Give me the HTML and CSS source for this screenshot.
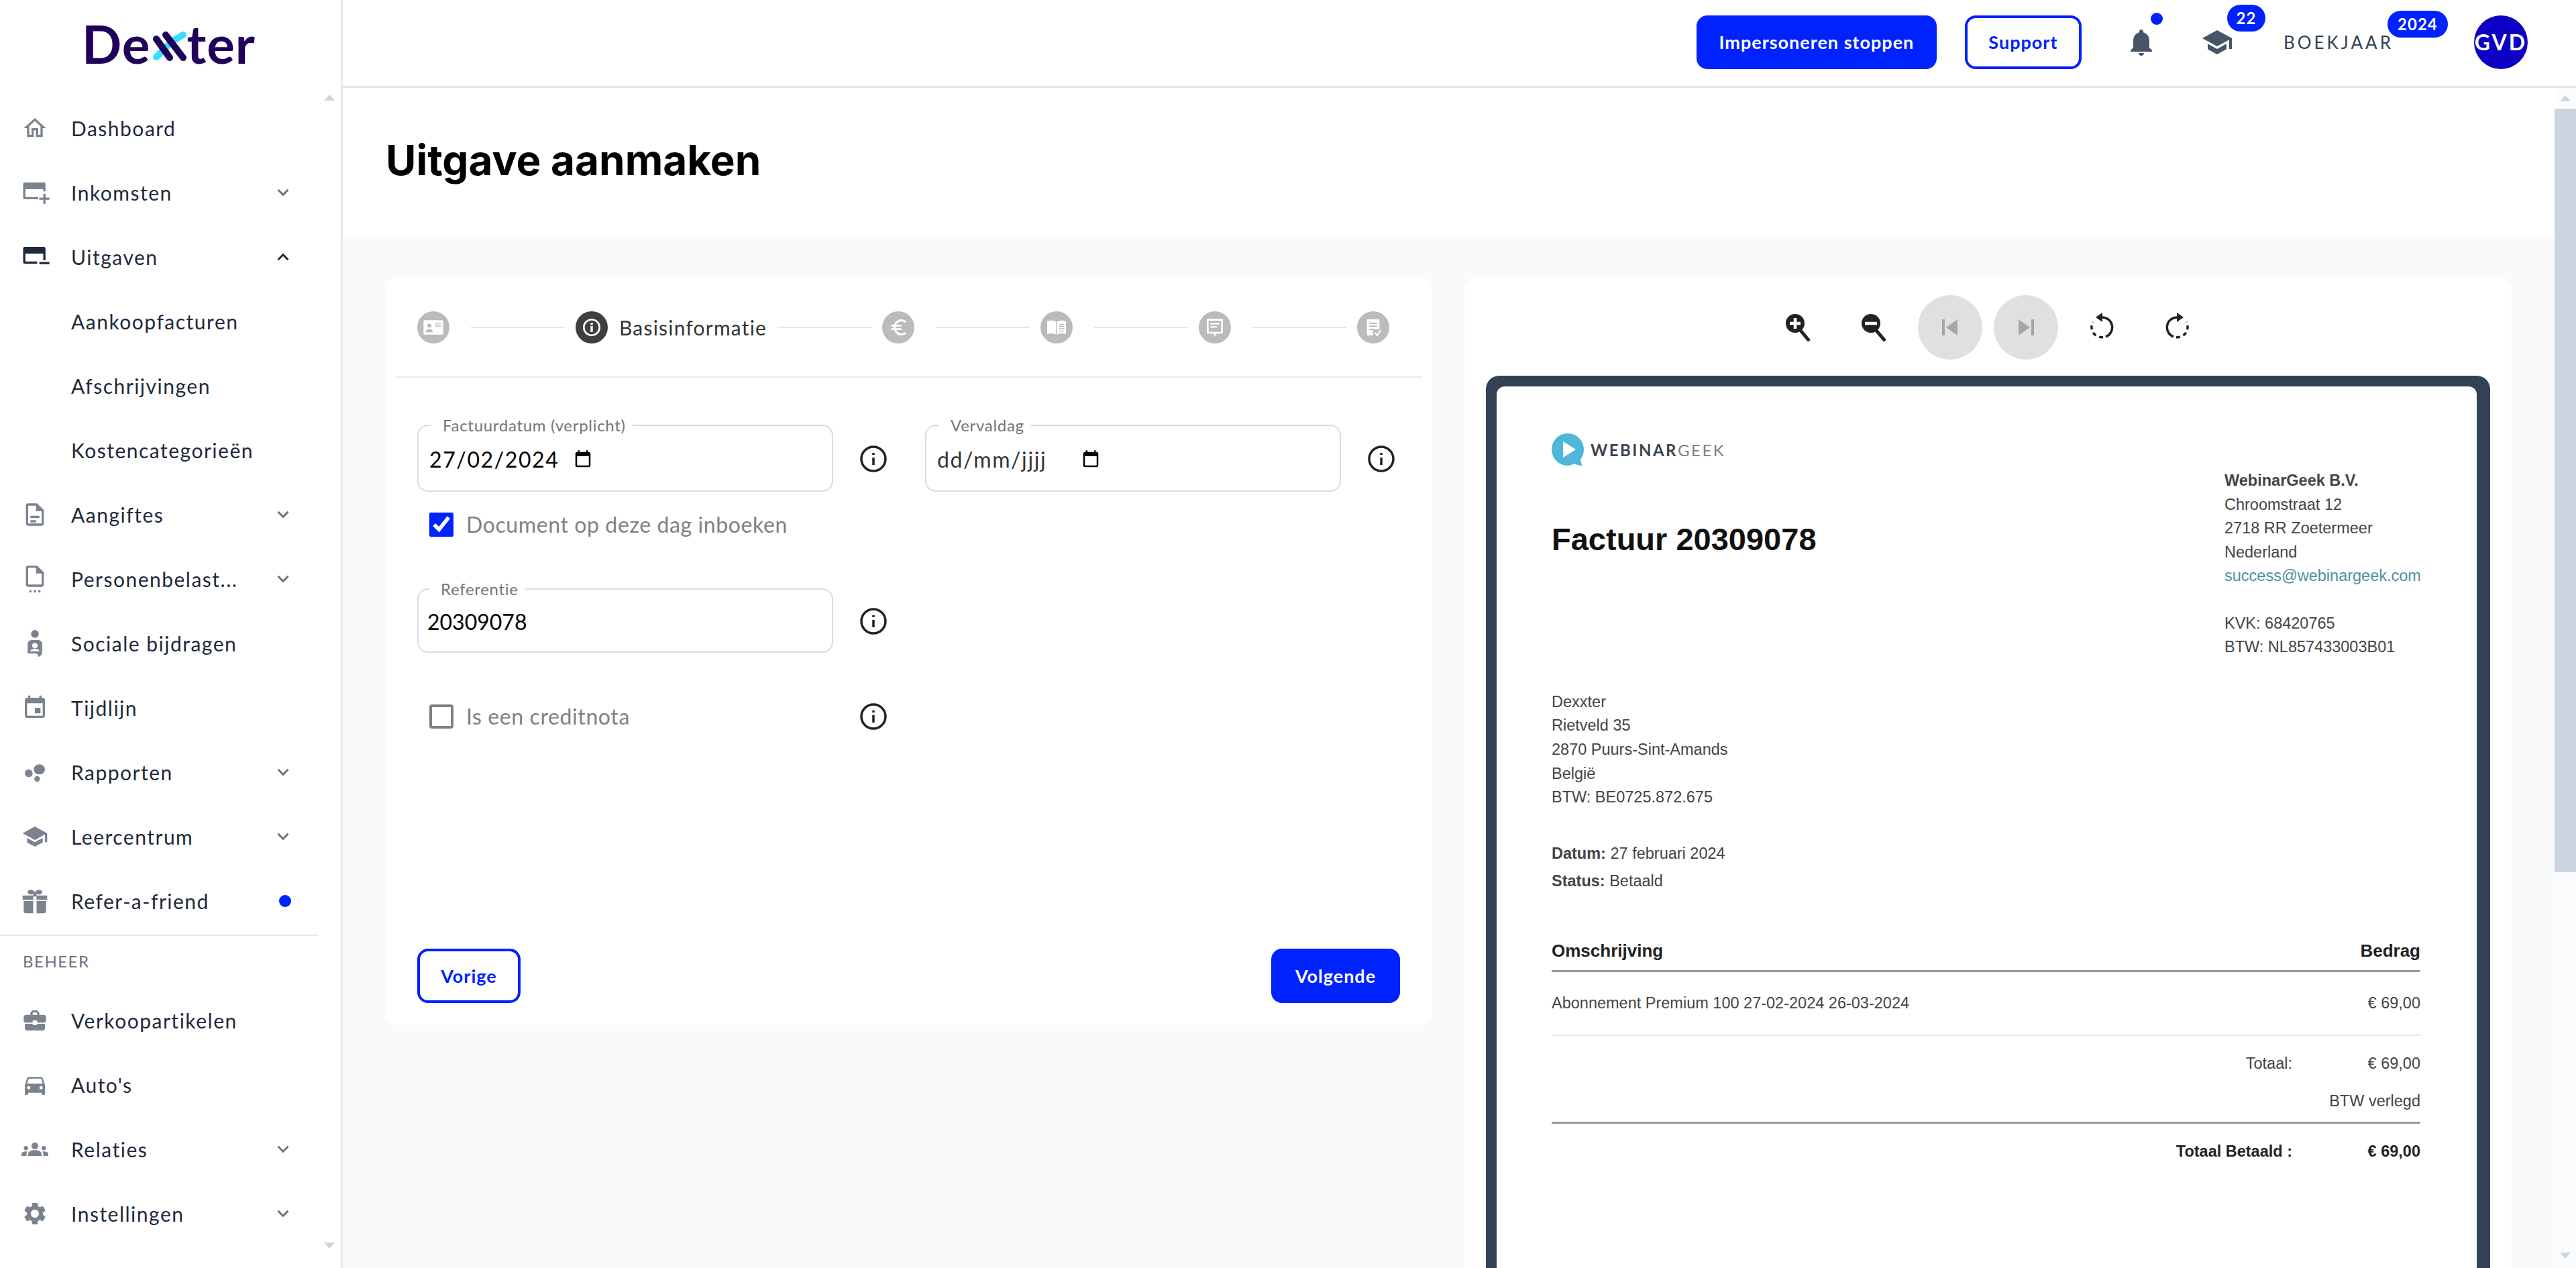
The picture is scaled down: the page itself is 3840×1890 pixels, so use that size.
FILE: index.html
```html
<!DOCTYPE html>
<html lang="nl">
<head>
    <meta charset="UTF-8">
    <title>Uitgave aanmaken</title>
    <link rel="stylesheet" href="styles.css">
</head>
<body>
    <aside class="sidebar">
        <div class="logo">
            <span>De</span>
            <svg class="logoX" viewBox="0 0 50 44" width="50" height="44">
                <path d="M5 38L22 21M31 13L45 5" stroke="#38dcff" stroke-width="10" stroke-linecap="round" fill="none"/>
                <path d="M5 11L25 39M19 5L45 39" stroke="#20005a" stroke-width="10" stroke-linecap="round" fill="none"/>
            </svg>
            <span>ter</span>
        </div>
        <nav class="nav">
            <a class="navRow">
                <svg class="navIcon" viewBox="0 0 24 24"><path d="M12 5.69l5 4.5V18h-2v-6H9v6H7v-7.81l5-4.5M12 3L2 12h3v8h6v-6h2v6h6v-8h3L12 3z"/></svg>
                Dashboard
            </a>
            <a class="navRow">
                <svg class="navIcon" viewBox="0 0 24 24"><path d="M3 3h17a1.500 1.500 0 0 1 1.500 1.500V11h-2V9H3.500v7H15v2H3a1.500 1.500 0 0 1-1.500-1.500v-12A1.500 1.500 0 0 1 3 3z"/><path d="M19.500 13h2v3.500H25v2h-3.500V22h-2v-3.500H16v-2h3.500z"/></svg>
                Inkomsten
                <svg class="chev" viewBox="0 0 24 24"><path d="M3 7l9 9 9-9" /></svg>
            </a>
            <a class="navRow active">
                <svg class="navIcon" viewBox="0 0 24 24"><path d="M3 3h17a1.500 1.500 0 0 1 1.500 1.500V15h-2V9H3.500v7H14v2H3a1.500 1.500 0 0 1-1.500-1.500v-12A1.500 1.500 0 0 1 3 3z"/><path d="M16 16.500h9v2h-9z"/></svg>
                Uitgaven
                <svg class="chev" viewBox="0 0 24 24"><path d="M3 17l9-9 9 9" /></svg>
            </a>
            <a class="navRow sub">Aankoopfacturen</a>
            <a class="navRow sub">Afschrijvingen</a>
            <a class="navRow sub">Kostencategorieën</a>
            <a class="navRow">
                <svg class="navIcon" viewBox="0 0 24 24"><path d="M14 2H6a2 2 0 0 0-2 2v16a2 2 0 0 0 2 2h12a2 2 0 0 0 2-2V8zm4 18H6V4h7v5h5zM8 13h8v2H8zm0 4h5v2H8z"/></svg>
                Aangiftes
                <svg class="chev" viewBox="0 0 24 24"><path d="M3 7l9 9 9-9" /></svg>
            </a>
            <a class="navRow">
                <svg class="navIcon" viewBox="0 0 24 24"><path d="M14 0H6a2 2 0 0 0-2 2v15a2 2 0 0 0 2 2h12a2 2 0 0 0 2-2V6zm4 17H6V2h7v5h5zM7 22h2v2H7zm4 0h2v2h-2zm4 0h2v2h-2z"/></svg>
                Personenbelast...
                <svg class="chev" viewBox="0 0 24 24"><path d="M3 7l9 9 9-9" /></svg>
            </a>
            <a class="navRow">
                <svg class="navIcon" viewBox="0 0 24 24"><circle cx="12" cy="3.500" r="3.500"/><path d="M9 9h6a3.500 3.500 0 0 1 3.500 3.500V20a4 4 0 0 1-4 4c1-1 .5-3-2.500-3H5.500v-8.500A3.500 3.500 0 0 1 9 9zm3 2.500a2.500 2.500 0 0 0 0 5 2.500 2.500 0 0 0 0-5zM8 19h8c0-1.500-2-2-4-2s-4 .5-4 2z"/></svg>
                Sociale bijdragen
            </a>
            <a class="navRow">
                <svg class="navIcon" viewBox="0 0 24 24"><path d="M17 12h-5v5h5v-5zM16 1v2H8V1H6v2H5c-1.110 0-1.990.9-1.990 2L3 19c0 1.100.89 2 2 2h14c1.100 0 2-.9 2-2V5c0-1.100-.9-2-2-2h-1V1h-2zm3 18H5V8h14v11z"/></svg>
                Tijdlijn
            </a>
            <a class="navRow">
                <svg class="navIcon" viewBox="0 0 24 24"><circle cx="6.500" cy="13" r="3.500"/><ellipse cx="16" cy="9.500" rx="5" ry="4.500"/><circle cx="14" cy="18" r="2.500"/></svg>
                Rapporten
                <svg class="chev" viewBox="0 0 24 24"><path d="M3 7l9 9 9-9" /></svg>
            </a>
            <a class="navRow">
                <svg class="navIcon" viewBox="0 0 24 24"><path d="M5 13.180v4L12 21l7-3.820v-4L12 17l-7-3.820zM12 3L1 9l11 6 9-4.910V17h2V9L12 3z"/></svg>
                Leercentrum
                <svg class="chev" viewBox="0 0 24 24"><path d="M3 7l9 9 9-9" /></svg>
            </a>
            <a class="navRow">
                <svg class="navIcon" viewBox="0 0 24 24"><path d="M1 7h9.500V5.500C9 6.500 5.500 6.500 5.500 4c0-2.500 4.500-3 6.500 0 2-3 6.500-2.500 6.500 0 0 2.500-3.500 2.500-5 1.500V7H23v4H13.500v-3h-3v3H1zm1 5h8.500v11H4a2 2 0 0 1-2-2zm11.500 0H22v9a2 2 0 0 1-2 2h-6.500z"/></svg>
                Refer-a-friend
                <span class="navDot"></span>
            </a>
        </nav>
        <hr class="navRule">
        <div class="navHead">BEHEER</div>
        <nav class="nav">
            <a class="navRow">
                <svg class="navIcon" viewBox="0 0 24 24"><path d="M10 16v-1H3.010L3 19c0 1.110.89 2 2 2h14c1.110 0 2-.89 2-2v-4h-7v1h-4zm10-9h-4.010V5l-2-2h-4l-2 2v2H4c-1.100 0-2 .9-2 2v3c0 1.110.89 2 2 2h6v-2h4v2h6c1.100 0 2-.9 2-2V9c0-1.100-.9-2-2-2zm-6 0h-4V5h4v2z"/></svg>
                Verkoopartikelen
            </a>
            <a class="navRow">
                <svg class="navIcon" viewBox="0 0 24 24"><path d="M18.920 6.010C18.720 5.420 18.160 5 17.500 5h-11c-.66 0-1.210.42-1.420 1.010L3 12v8c0 .55.45 1 1 1h1c.55 0 1-.45 1-1v-1h12v1c0 .55.45 1 1 1h1c.55 0 1-.45 1-1v-8l-2.080-5.990zM6.500 16c-.83 0-1.500-.67-1.500-1.500S5.670 13 6.500 13s1.500.67 1.500 1.500S7.330 16 6.500 16zm11 0c-.83 0-1.500-.67-1.500-1.500s.67-1.500 1.500-1.500 1.500.67 1.500 1.500-.67 1.500-1.500 1.500zM5 11l1.500-4.500h11L19 11H5z"/></svg>
                Auto's
            </a>
            <a class="navRow">
                <svg class="navIcon" viewBox="0 0 24 24"><path d="M12 12.750c1.630 0 3.070.39 4.240.9 1.080.48 1.760 1.560 1.760 2.730V18H6v-1.610c0-1.180.68-2.260 1.760-2.730 1.170-.52 2.610-.91 4.240-.91zM4 13c1.100 0 2-.9 2-2s-.9-2-2-2-2 .9-2 2 .9 2 2 2zm1.130 1.100c-.37-.06-.74-.1-1.130-.1-.99 0-1.930.21-2.780.58C.48 14.900 0 15.620 0 16.430V18h4.500v-1.610c0-.83.23-1.610.63-2.290zM20 13c1.100 0 2-.9 2-2s-.9-2-2-2-2 .9-2 2 .9 2 2 2zm4 3.430c0-.81-.48-1.530-1.220-1.850-.85-.37-1.790-.58-2.780-.58-.39 0-.76.04-1.130.1.4.68.63 1.460.63 2.290V18H24v-1.570zM12 6c1.660 0 3 1.340 3 3s-1.340 3-3 3-3-1.340-3-3 1.340-3 3-3z"/></svg>
                Relaties
                <svg class="chev" viewBox="0 0 24 24"><path d="M3 7l9 9 9-9" /></svg>
            </a>
            <a class="navRow">
                <svg class="navIcon" viewBox="0 0 24 24"><path d="M19.140 12.940c.04-.3.06-.61.06-.94 0-.32-.02-.64-.07-.94l2.030-1.580c.18-.14.23-.41.12-.61l-1.920-3.320c-.12-.22-.37-.29-.59-.22l-2.390.96c-.5-.38-1.030-.7-1.620-.94l-.36-2.540c-.04-.24-.24-.41-.48-.41h-3.840c-.24 0-.43.17-.47.41l-.36 2.540c-.59.24-1.130.57-1.620.94l-2.390-.96c-.22-.08-.47 0-.59.22L2.740 8.870c-.12.21-.08.47.12.61l2.030 1.580c-.05.3-.09.63-.09.94s.02.64.07.94l-2.030 1.580c-.18.14-.23.41-.12.61l1.920 3.320c.12.22.37.29.59.22l2.390-.96c.5.38 1.030.7 1.620.94l.36 2.540c.05.24.24.41.48.41h3.840c.24 0 .44-.17.47-.41l.36-2.540c.59-.24 1.130-.56 1.620-.94l2.390.96c.22.08.47 0 .59-.22l1.920-3.320c.12-.22.07-.47-.12-.61l-2.010-1.580zM12 15.600c-1.980 0-3.600-1.620-3.600-3.600s1.620-3.600 3.600-3.600 3.600 1.620 3.600 3.600-1.620 3.600-3.600 3.600z"/></svg>
                Instellingen
                <svg class="chev" viewBox="0 0 24 24"><path d="M3 7l9 9 9-9" /></svg>
            </a>
        </nav>
        <span class="sideArrow up"></span>
        <span class="sideArrow down"></span>
    </aside>

    <div class="main">
        <header class="topbar">
            <button class="btn primary">Impersoneren stoppen</button>
            <button class="btn outline">Support</button>
            <div class="topIcon bell">
                <svg viewBox="0 0 24 24" width="48" height="48"><path d="M12 22c1.100 0 2-.9 2-2h-4c0 1.100.89 2 2 2zm6-6v-5c0-3.070-1.640-5.640-4.500-6.320V4c0-.83-.67-1.500-1.500-1.500s-1.500.67-1.500 1.500v.68C7.630 5.360 6 7.920 6 11v5l-2 2v1h16v-1l-2-2z"/></svg>
                <span class="bellDot"></span>
            </div>
            <div class="topIcon cap">
                <svg viewBox="0 0 24 24" width="48" height="48"><path d="M5 13.180v4L12 21l7-3.820v-4L12 17l-7-3.820zM12 3L1 9l11 6 9-4.910V17h2V9L12 3z"/></svg>
                <span class="badge capBadge">22</span>
            </div>
            <div class="year">
                BOEKJAAR
                <span class="badge yearBadge">2024</span>
            </div>
            <div class="avatar">GVD</div>
        </header>

        <div class="pageWrap">
            <div class="page">
                <div class="titleBand"><h1>Uitgave aanmaken</h1></div>
                <div class="columns">
                    <section class="card formCard">
                        <div class="steps">
                            <span class="stepDot">
                                <svg viewBox="0 0 24 24"><rect x="1" y="4" width="22" height="16" rx="1" fill="#fff"/><circle cx="7.500" cy="10" r="2.200" fill="#bbb"/><path d="M3.500 17.500c0-2.500 1.500-3.500 4-3.500s4 1 4 3.500zM14 7.500h6.500v1H14zm0 2.500h6.500v1H14z" fill="#bbb"/></svg>
                            </span>
                            <span class="stepLine firstLine"></span>
                            <span class="stepDot current">
                                <svg viewBox="0 0 24 24"><circle cx="12" cy="12" r="8.800" fill="none" stroke="#fff" stroke-width="2"/><path d="M10.700 10.500h2.600V17h-2.600zM10.700 6.800h2.600v2.400h-2.600z" fill="#fff"/></svg>
                            </span>
                            <span class="stepLabel">Basisinformatie</span>
                            <span class="stepLine"></span>
                            <span class="stepDot">
                                <svg viewBox="0 0 24 24"><path d="M15.500 18.500A6.500 6.500 0 0 1 9.700 15H15.500v-2H9.060a6 6 0 0 1 0-2h6.440V9H9.700a6.500 6.500 0 0 1 5.800-3.500c1.600 0 3.100.6 4.200 1.500L21 5.200A8.900 8.900 0 0 0 15.500 3 9 9 0 0 0 7.300 9H4v2h2.600a9 9 0 0 0 0 2H4v2h3.300a9 9 0 0 0 8.200 6c2.100 0 4-.8 5.500-2l-1.300-1.800c-1.100.9-2.600 1.300-4.200 1.300z" fill="#fff"/></svg>
                            </span>
                            <span class="stepLine"></span>
                            <span class="stepDot">
                                <svg viewBox="0 0 24 24"><path d="M1.500 5c3.500-1 7-1 10 .5V20c-3-1.500-6.500-1.500-10-.5zm11 .5c3-1.500 6.500-1.500 10-.5v14.500c-3.500-1-7-1-10 .5z" fill="#fff"/><path d="M14.500 8h6v1h-6zm0 2.500h6v1h-6zm0 2.500h6v1h-6zm0 2.500h6v1h-6z" fill="#bbb"/></svg>
                            </span>
                            <span class="stepLine"></span>
                            <span class="stepDot">
                                <svg viewBox="0 0 24 24"><path d="M4 2.500h16a1 1 0 0 1 1 1V18a1 1 0 0 1-1 1h-6l-2.500 3.500-.5-3.500H4a1 1 0 0 1-1-1V3.500a1 1 0 0 1 1-1z" fill="#fff"/><path d="M5 4.500h14V17H5z" fill="#bbb"/><path d="M7 7h10v1.800H7zm0 3.500h7v1.800H7z" fill="#fff"/></svg>
                            </span>
                            <span class="stepLine"></span>
                            <span class="stepDot">
                                <svg viewBox="0 0 24 24"><path d="M6 3h12a1 1 0 0 1 1 1v16a1 1 0 0 1-1 1H6a1 1 0 0 1-1-1V4a1 1 0 0 1 1-1z" fill="#fff"/><path d="M7.500 6.500h9V8h-9zm0 3.500h9v1.500h-9zm0 3.500h5V15h-5zM12 14h9v9h-9z" fill="#bbb"/><path d="M14 18l2.500 3 4-6" stroke="#fff" stroke-width="1.500" fill="none"/></svg>
                            </span>
                        </div>
                        <div class="form">
                            <div class="formRow">
                                <div class="fieldWrap">
                                    <fieldset class="field dateField">
                                        <legend>Factuurdatum (verplicht)</legend>
                                        <input class="fieldInput dateInput" value="27/02/2024">
                                        <svg class="calIcon" viewBox="0 0 24 24"><path d="M19 3h-1V1h-2v2H8V1H6v2H5a2 2 0 0 0-2 2v14a2 2 0 0 0 2 2h14a2 2 0 0 0 2-2V5a2 2 0 0 0-2-2zm0 16H5V8h14z"/></svg>
                                    </fieldset>
                                    <svg class="info" viewBox="0 0 40 40"><circle cx="20" cy="20" r="18"/><path d="M20 18v11M20 11v3"/></svg>
                                </div>
                                <div class="fieldWrap">
                                    <fieldset class="field dateField">
                                        <legend>Vervaldag</legend>
                                        <input class="fieldInput dateInput placeholderDate" value="dd/mm/jjjj">
                                        <svg class="calIcon" viewBox="0 0 24 24"><path d="M19 3h-1V1h-2v2H8V1H6v2H5a2 2 0 0 0-2 2v14a2 2 0 0 0 2 2h14a2 2 0 0 0 2-2V5a2 2 0 0 0-2-2zm0 16H5V8h14z"/></svg>
                                    </fieldset>
                                    <svg class="info" viewBox="0 0 40 40"><circle cx="20" cy="20" r="18"/><path d="M20 18v11M20 11v3"/></svg>
                                </div>
                            </div>
                            <label class="check bookCheck">
                                <input type="checkbox" checked>
                                Document op deze dag inboeken
                            </label>
                            <div class="fieldWrap refWrap">
                                <fieldset class="field refField">
                                    <legend>Referentie</legend>
                                    <input class="fieldInput refInput" value="20309078">
                                </fieldset>
                                <svg class="info" viewBox="0 0 40 40"><circle cx="20" cy="20" r="18"/><path d="M20 18v11M20 11v3"/></svg>
                            </div>
                            <div class="creditRow">
                                <label class="check">
                                    <input type="checkbox">
                                    Is een creditnota
                                </label>
                                <svg class="info" viewBox="0 0 40 40"><circle cx="20" cy="20" r="18"/><path d="M20 18v11M20 11v3"/></svg>
                            </div>
                            <div class="formActions">
                                <button class="btn outline small">Vorige</button>
                                <button class="btn primary small">Volgende</button>
                            </div>
                        </div>
                    </section>

                    <section class="card viewerCard">
                        <div class="toolbar">
                            <span class="tool">
                                <svg viewBox="0 0 40 42" width="40" height="42"><path d="M20 22l16 19" stroke="#222" stroke-width="5"/><circle cx="15" cy="15" r="14" fill="#222"/><path d="M15 7v16M7 15h16" stroke="#fff" stroke-width="4.500"/></svg>
                            </span>
                            <span class="tool">
                                <svg viewBox="0 0 40 42" width="40" height="42"><path d="M20 22l16 19" stroke="#222" stroke-width="5"/><circle cx="15" cy="15" r="14" fill="#222"/><path d="M6 15h18" stroke="#fff" stroke-width="4.500"/></svg>
                            </span>
                            <span class="tool disabled">
                                <svg viewBox="0 0 24 24" width="24" height="24"><path d="M0 0h4v24H0zM23 0v24L6 12z" fill="#a6a6a6"/></svg>
                            </span>
                            <span class="tool disabled">
                                <svg viewBox="0 0 24 24" width="24" height="24"><path d="M24 0h-4v24h4zM1 0v24l17-12z" fill="#a6a6a6"/></svg>
                            </span>
                            <span class="tool">
                                <svg class="rotate" viewBox="0 0 36 40" width="36" height="40"><path d="M18 7A15 15 0 0 1 24 36" fill="none" stroke="#222" stroke-width="3.500"/><path d="M20 36.500A15 15 0 0 1 5 14" fill="none" stroke="#222" stroke-width="3.500" stroke-dasharray="6 5"/><path d="M19 0v14L9 7z" fill="#222"/></svg>
                            </span>
                            <span class="tool">
                                <svg class="rotate" viewBox="0 0 36 40" width="36" height="40"><path d="M18 7A15 15 0 0 0 12 36" fill="none" stroke="#222" stroke-width="3.500"/><path d="M16 36.500A15 15 0 0 0 31 14" fill="none" stroke="#222" stroke-width="3.500" stroke-dasharray="6 5"/><path d="M17 0v14L27 7z" fill="#222"/></svg>
                            </span>
                        </div>
                        <div class="docFrame">
                            <div class="doc">
                                <div class="docTop">
                                    <div>
                                        <div class="docLogo">
                                            <svg viewBox="0 0 48 48" width="48" height="48"><path d="M24 0a24 24 0 0 1 24 24c0 6-2 11-5 15 .5 4 2 7 3 9-5 0-9-1-12-3-3 1.500-6.500 3-10 3A24 24 0 0 1 24 0z" fill="#4fb7d8"/><path d="M17 12l19 12-19 12z" fill="#fff"/></svg>
                                            <span class="wg"><b>WEBINAR</b>GEEK</span>
                                        </div>
                                        <h2 class="docTitle">Factuur 20309078</h2>
                                    </div>
                                    <div class="docSeller">
                                        <b>WebinarGeek B.V.</b><br>
                                        Chroomstraat 12<br>
                                        2718 RR Zoetermeer<br>
                                        Nederland<br>
                                        <span class="docLink">success@webinargeek.com</span>
                                        <div class="docTax">
                                            KVK: 68420765<br>
                                            BTW: NL857433003B01
                                        </div>
                                    </div>
                                </div>
                                <div class="docBuyer">
                                    Dexxter<br>
                                    Rietveld 35<br>
                                    2870 Puurs-Sint-Amands<br>
                                    België<br>
                                    BTW: BE0725.872.675
                                </div>
                                <div class="docMeta">
                                    <div><b>Datum:</b> 27 februari 2024</div>
                                    <div><b>Status:</b> Betaald</div>
                                </div>
                                <div class="docHead"><span>Omschrijving</span><span>Bedrag</span></div>
                                <div class="docLine"><span>Abonnement Premium 100 27-02-2024 26-03-2024</span><span>€ 69,00</span></div>
                                <div class="docSum"><span>Totaal:</span><span>€ 69,00</span></div>
                                <div class="docVat">BTW verlegd</div>
                                <div class="docSum docPaid"><span>Totaal Betaald :</span><span>€ 69,00</span></div>
                            </div>
                        </div>
                    </section>
                </div>
            </div>
            <div class="scrollbar">
                <span class="barArrow"></span>
                <span class="barThumb"></span>
                <span class="barArrow barDown"></span>
            </div>
        </div>
    </div>
</body>
</html>
```

FILE: styles.css
```css
*{
    box-sizing: border-box;
}

body{
    margin:0;
    height:100vh;
    display:flex;
    overflow:hidden;
    font-family: "Lato", "Liberation Sans", sans-serif;
    color:#1e293b;
    background:#fff;
}

/* sidebar */

.sidebar{
    position:relative;
    width:511px;
    flex:none;
    border-right:solid 3px #e2e8f0;
    background:#fff;
}

.logo{
    height:143px;
    padding-left:122px;
    display:flex;
    align-items:center;
    font-size:78px;
    font-weight:700;
    letter-spacing:1px;
    color:#20005a;
    padding-bottom:14px;
}

.logoX{
    margin:8px 0 0 4px;
}

.nav{
    display:flex;
    flex-direction:column;
}

.navRow{
    height:96px;
    width:434px;
    padding-left:32px;
    display:flex;
    align-items:center;
    font-size:30px;
    letter-spacing:1.500px;
}

.navRow.sub{
    padding-left:106px;
}

.navIcon{
    width:40px;
    height:40px;
    margin-right:34px;
    flex:none;
    fill:#7b838f;
    overflow:visible;
}

.active .navIcon{
    fill:#1e293b;
}

.chev{
    width:20px;
    height:20px;
    margin-left:auto;
    margin-right:2px;
    fill:none;
    stroke:#6b7280;
    stroke-width:3.500;
}

.active .chev{
    stroke:#1e293b;
}

.navDot{
    width:18px;
    height:18px;
    margin-left:auto;
    border-radius:50%;
    background:#0022ff;
}

.navRule{
    margin:2px 0 0;
    width:474px;
    border:none;
    border-top:solid 2px #e2e8f0;
}

.navHead{
    height:78px;
    padding-left:34px;
    line-height:76px;
    font-size:24px;
    letter-spacing:1.500px;
    color:#6b7280;
}

.sideArrow{
    position:absolute;
    left:483px;
    width:0;
    height:0;
    border-left:8px solid transparent;
    border-right:8px solid transparent;
}

.sideArrow.up{
    top:141px;
    border-bottom:9px solid #cbd5e1;
}

.sideArrow.down{
    top:1852px;
    border-top:9px solid #cbd5e1;
}

/* top bar */

.main{
    flex:1;
    min-width:0;
    display:flex;
    flex-direction:column;
}

.topbar{
    height:131px;
    flex:none;
    padding-right:72px;
    padding-bottom:3px;
    display:flex;
    align-items:center;
    justify-content:flex-end;
    background:#fff;
    border-bottom:solid 3px #e2e8f0;
}

.btn{
    height:80px;
    border-radius:16px;
    font-family:inherit;
    font-size:27px;
    font-weight:700;
    letter-spacing:1px;
    cursor:pointer;
}

.btn.primary{
    width:358px;
    border:none;
    background:#0022ff;
    color:#fff;
}

.btn.outline{
    width:174px;
    margin-left:42px;
    border:solid 4px #0022ff;
    background:#fff;
    color:#0022ff;
}

.topIcon{
    position:relative;
    fill:#475569;
    display:flex;
}

.bell{
    margin-left:65px;
}

.bellDot{
    position:absolute;
    top:-20px;
    left:38px;
    width:18px;
    height:18px;
    border-radius:50%;
    background:#0022ff;
}

.cap{
    margin-left:65px;
}

.badge{
    position:absolute;
    height:40px;
    border-radius:20px;
    background:#0022ff;
    color:#fff;
    font-size:24px;
    font-weight:700;
    line-height:40px;
    letter-spacing:1px;
    text-align:center;
}

.capBadge{
    top:-32px;
    left:39px;
    width:57px;
}

.year{
    position:relative;
    margin-left:75px;
    font-size:26px;
    letter-spacing:4px;
    color:#334155;
}

.yearBadge{
    top:-31px;
    left:155px;
    width:90px;
}

.avatar{
    width:80px;
    height:80px;
    margin-left:120px;
    border-radius:50%;
    background:#0d00c4;
    color:#fff;
    font-size:32px;
    font-weight:700;
    letter-spacing:3px;
    line-height:80px;
    text-align:center;
}

/* page */

.pageWrap{
    flex:1;
    min-height:0;
    display:flex;
}

.page{
    flex:1;
    min-width:0;
    background:#f8fafc;
}

.scrollbar{
    width:32px;
    flex:none;
    display:flex;
    flex-direction:column;
    align-items:center;
    background:#fbfcfd;
}

.barArrow{
    margin-top:11px;
    width:0;
    height:0;
    border-left:8px solid transparent;
    border-right:8px solid transparent;
    border-bottom:9px solid #cbd5e1;
}

.barDown{
    margin-top:auto;
    margin-bottom:14px;
    border-bottom:none;
    border-top:9px solid #cbd5e1;
}

.barThumb{
    width:100%;
    height:1138px;
    margin-top:11px;
    background:#cbd5e1;
}

.titleBand{
    height:221px;
    padding-left:63px;
    display:flex;
    align-items:center;
    background:#fff;
}

h1{
    margin:0 0 6px 1px;
    font-family:"Inter", "Liberation Sans", sans-serif;
    font-size:62px;
    font-weight:700;
    color:#000;
}

.columns{
    padding:63px 64px 0 63px;
    display:grid;
    grid-template-columns:1fr 1fr;
    gap:48px;
    align-items:start;
}

.card{
    background:#fff;
    border-radius:16px;
}

/* form card */

.formCard{
    height:1112px;
    display:flex;
    flex-direction:column;
}

.steps{
    height:148px;
    margin:0 16px;
    padding:0 48px 0 32px;
    display:flex;
    align-items:center;
    border-bottom:solid 2px #e5e7eb;
}

.stepDot{
    width:48px;
    height:48px;
    flex:none;
    border-radius:50%;
    background:#bbb;
    display:flex;
    align-items:center;
    justify-content:center;
}

.stepDot svg{
    width:32px;
    height:32px;
}

.stepDot.current{
    background:#3f3f3f;
}

.stepLabel{
    margin-left:17px;
    font-size:30px;
    letter-spacing:1.200px;
    color:#333;
    white-space:nowrap;
}

.stepLine{
    flex:1;
    height:2px;
    margin:0 16px;
    background:#e5e7eb;
}

.stepDot + .stepLine{
    margin-left:32px;
}

.form{
    flex:1;
    padding:59px 48px 32px;
    display:flex;
    flex-direction:column;
}

.formRow{
    display:flex;
    gap:57px;
}

.fieldWrap{
    display:flex;
    align-items:flex-end;
    gap:40px;
}

.field{
    margin:0;
    width:620px;
    height:111px;
    padding:0 16px 8px;
    display:flex;
    align-items:center;
    border:solid 2px #d6dce5;
    border-radius:16px;
}

.refField{
    height:107px;
    padding-left:13px;
}

legend{
    margin-left:3px;
    padding:0 10px 0 17px;
    font-size:24px;
    line-height:24px;
    letter-spacing:.7px;
    color:#757575;
}

.fieldInput{
    flex:1;
    min-width:0;
    padding:0;
    border:none;
    outline:none;
    background:none;
    font-family:inherit;
    font-size:32px;
    letter-spacing:1.600px;
    color:#000;
}

.refInput{
    letter-spacing:0;
}

.dateInput{
    flex:none;
    width:214px;
}

.placeholderDate{
    color:#333;
}

.calIcon{
    width:30px;
    height:30px;
    fill:#000;
}

.info{
    width:40px;
    height:40px;
    margin-bottom:29px;
    flex:none;
    fill:none;
    stroke:#222;
    stroke-width:3.500;
}

.refWrap .info{
    margin-bottom:27px;
}

.check{
    display:flex;
    align-items:center;
    gap:19px;
    padding-left:18px;
    font-size:32px;
    line-height:36px;
    letter-spacing:.6px;
    color:#808080;
}

.check input{
    width:36px;
    height:36px;
    margin:0;
    accent-color:#0022ff;
}

.check input:not(:checked){
    appearance:none;
    border:solid 4px #808080;
    border-radius:4px;
    background:#fff;
}

.bookCheck{
    margin-top:31px;
}

.refWrap{
    margin-top:66px;
}

.creditRow{
    width:700px;
    margin-top:75px;
    display:flex;
    align-items:center;
    justify-content:space-between;
}

.creditRow .info{
    margin:0;
}

.formActions{
    margin-top:auto;
    display:flex;
    justify-content:space-between;
}

.btn.small{
    height:81px;
}

.btn.outline.small{
    width:154px;
    margin-left:0;
}

.btn.primary.small{
    width:192px;
}

/* viewer */

.viewerCard{
    height:1500px;
}

.toolbar{
    height:145px;
    display:flex;
    align-items:center;
    justify-content:center;
    gap:17px;
}

.tool{
    width:96px;
    height:96px;
    border-radius:50%;
    display:flex;
    align-items:center;
    justify-content:center;
}

.tool.disabled{
    background:#e0e0e0;
}

.rotate{
    margin-top:-4px;
}

.docFrame{
    margin:0 32px 0 32px;
    height:1400px;
    padding:16px 20px 0 16px;
    border-radius:20px 20px 0 0;
    background:#334155;
}

.doc{
    height:100%;
    padding:70px 84px 0 82px;
    border-radius:12px 12px 0 0;
    background:#fff;
    font-family:"Liberation Sans", Arial, sans-serif;
    font-size:23.500px;
    color:#444;
}

.docTop{
    display:flex;
    justify-content:space-between;
}

.docLogo{
    display:flex;
    align-items:center;
    gap:10px;
}

.wg{
    font-family:"Lato", sans-serif;
    font-size:24px;
    letter-spacing:2.500px;
    color:#77808a;
}

.wg b{
    color:#3a4450;
    font-weight:700;
}

.docTitle{
    margin:82px 0 0;
    font-size:47px;
    font-weight:700;
    color:#111;
}

.docSeller{
    width:292px;
    padding-top:53px;
    line-height:35.500px;
    white-space:nowrap;
}

.docLink{
    color:#4f8f9c;
}

.docTax{
    margin-top:35px;
}

.docBuyer{
    margin-top:46px;
    line-height:35.700px;
}

.docMeta{
    margin-top:45px;
    line-height:41px;
}

.docHead{
    margin-top:68px;
    height:47px;
    display:flex;
    justify-content:space-between;
    align-items:flex-start;
    border-bottom:solid 3px #999;
    font-size:26px;
    font-weight:700;
    color:#222;
}

.docLine{
    height:95px;
    padding-top:33px;
    display:flex;
    justify-content:space-between;
    border-bottom:solid 2px #e5e5e5;
}

.docSum{
    height:84px;
    padding-top:28px;
    display:flex;
    justify-content:flex-end;
}

.docSum span:first-child{
    width:300px;
    text-align:right;
}

.docSum span:last-child{
    width:191px;
    text-align:right;
}

.docVat{
    height:47px;
    text-align:right;
    border-bottom:solid 3px #999;
}

.docPaid{
    font-weight:700;
    color:#222;
}
```
